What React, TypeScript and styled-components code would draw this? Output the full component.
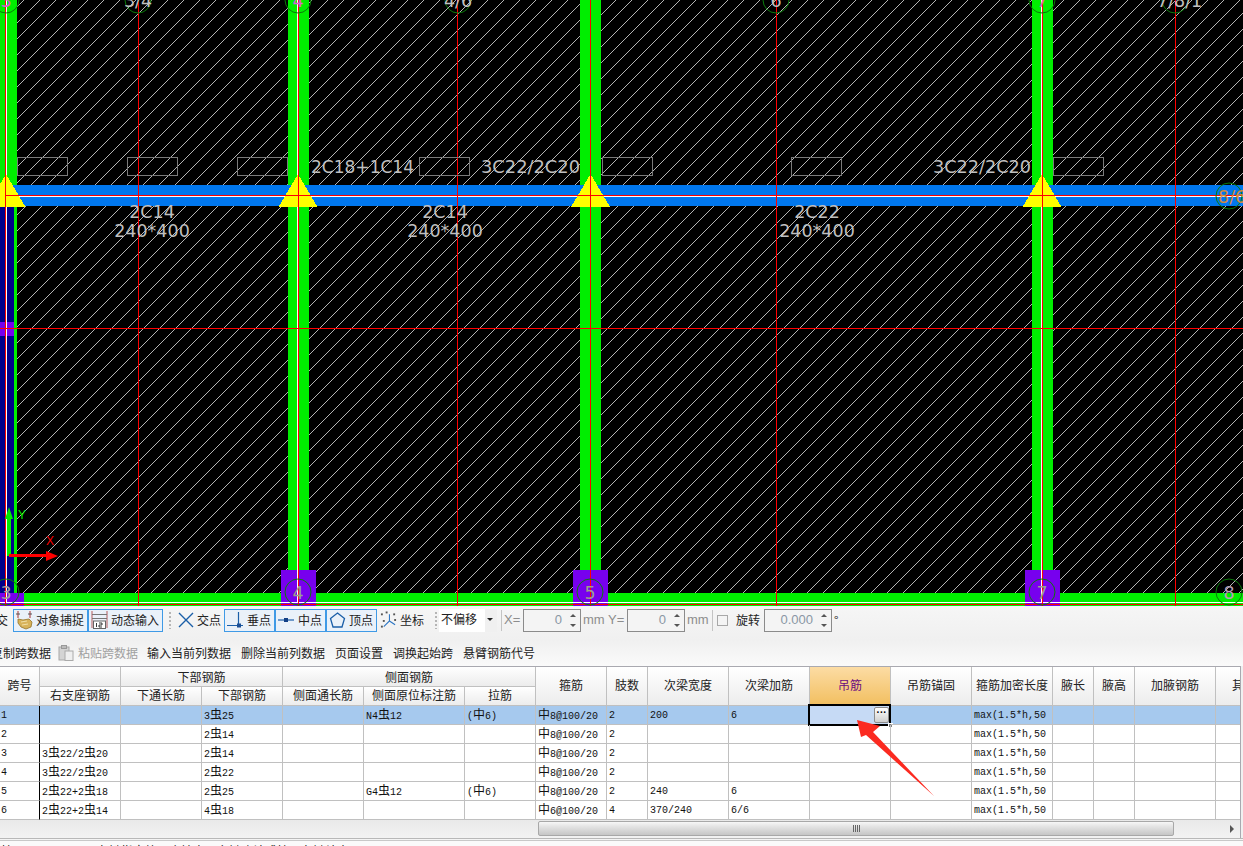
import React from "react";
import styled, { createGlobalStyle } from "styled-components";

const Global = createGlobalStyle`
  html, body { margin: 0; padding: 0; background: #f0f0f0; }
  body { font-family: "Noto Sans CJK SC", "Liberation Sans", sans-serif; font-size: 12px; color: #222; }
`;

const Page = styled.div`
  position: relative;
  width: 1243px;
  height: 846px;
  overflow: hidden;
  display: flex;
  flex-direction: column;
`;

/* ---------- CAD drawing ---------- */
const CadCanvas = styled.svg`
  display: block;
  width: 1243px;
  height: 606px;
  flex: none;
  background: #000;
`;

const crisp = { shapeRendering: "crispEdges" as const };
const GREEN = "#00ee00";
const BLUE = "#0077ee";
const PURPLE = "#7700ee";
const RED = "#ff0000";
const BEAM_COLS = [298, 590.5, 1042];

const Bubble = ({ x, y, label, color, tx }: { x: number; y: number; label: string; color: string; tx?: number }) => (
  <g>
    <circle cx={x} cy={y} r={13} fill="none" stroke="#0a7a0a" strokeWidth={1} />
    <text x={tx ?? x} y={y + 7} fill={color} fontFamily="DejaVu Sans" fontSize={17.5} textAnchor={tx ? "start" : "middle"}>
      {label}
    </text>
  </g>
);

const Drawing = () => (
  <CadCanvas viewBox="0 0 1243 606">
    <defs>
      <pattern id="hatch" width="16" height="16" patternUnits="userSpaceOnUse" patternTransform="translate(8 0)">
        <line x1="16" y1="0" x2="0" y2="16" stroke="#b4b4b4" strokeWidth="1" shapeRendering="crispEdges" />
      </pattern>
    </defs>
    <rect width="1243" height="606" fill="url(#hatch)" />

    {/* columns */}
    <rect x="0" y="0" width="17" height="600" fill={GREEN} {...crisp} />
    <rect x="0" y="207" width="14" height="386" fill="#00008b" {...crisp} />
    {[288, 580, 1032].map((x) => (
      <rect key={x} x={x} y="0" width="21" height="600" fill={GREEN} {...crisp} />
    ))}

    {/* bottom beam and main beam */}
    <rect x="0" y="593" width="1243" height="13" fill={GREEN} {...crisp} />
    <rect x="0" y="185" width="1243" height="21" fill={BLUE} {...crisp} />

    {/* purple supports */}
    <rect x="0" y="593" width="24" height="13" fill={PURPLE} {...crisp} />
    <rect x="0" y="322" width="14" height="14" fill={PURPLE} {...crisp} />
    <rect x="281" y="570" width="35" height="36" fill={PURPLE} {...crisp} />
    <rect x="573" y="570" width="35" height="36" fill={PURPLE} {...crisp} />
    <rect x="1025" y="570" width="35" height="36" fill={PURPLE} {...crisp} />

    {/* centre lines */}
    <rect x="6" y="196" width="1237" height="1" fill="#fff" {...crisp} />
    <rect x="0" y="602" width="1243" height="1" fill="#fff" {...crisp} />
    {[6, 297, 590, 1041].map((x) => (
      <rect key={x} x={x} y="0" width="1" height="603" fill="#fff" {...crisp} />
    ))}

    {/* triangles */}
    {[6, ...BEAM_COLS].map((x) => (
      <polygon key={x} points={`${x},174 ${x + 19.5},207 ${x - 19.5},207`} fill="#ffff00" {...crisp} />
    ))}

    {[5, 138, 298, 457, 590, 776, 1042, 1175].map((x) => (
      <rect key={x} x={x} y="0" width="1" height="606" fill={RED} {...crisp} />
    ))}
    <rect x="6" y="195" width="1237" height="1" fill={RED} {...crisp} />
    <rect x="0" y="328" width="1243" height="1" fill={RED} {...crisp} />
    <rect x="0" y="604" width="1243" height="1" fill={RED} {...crisp} />

    {/* original span boxes */}
    {[17, 127, 237, 419, 602, 791, 1053].map((x) => (
      <rect key={x} x={x + 0.5} y="157.5" width="50" height="18" fill="none" stroke="#7a7a7a" strokeWidth="1" {...crisp} />
    ))}

    {/* annotations */}
    <g fill="#bfbfbf" fontFamily="DejaVu Sans" fontSize="17.5">
      <text x="311" y="173" textLength={103} lengthAdjust="spacingAndGlyphs">2C18+1C14</text>
      <text x="481" y="173" textLength={99} lengthAdjust="spacingAndGlyphs">3C22/2C20</text>
      <text x="933" y="173" textLength={98} lengthAdjust="spacingAndGlyphs">3C22/2C20</text>
      <g textAnchor="middle">
        <text x="152" y="218">2C14</text>
        <text x="152" y="237">240*400</text>
        <text x="445" y="218">2C14</text>
        <text x="445" y="237">240*400</text>
        <text x="817" y="218">2C22</text>
        <text x="817" y="237">240*400</text>
      </g>
    </g>

    {/* axis bubbles */}
    <Bubble x={6} y={0} label="3" color="#d860d8" />
    <Bubble x={138} y={0} label="3/4" color="#c0c0c0" />
    <Bubble x={298} y={0} label="4" color="#d860d8" />
    <Bubble x={458} y={0} label="4/6" color="#c0c0c0" />
    <Bubble x={776} y={0} label="6" color="#c0c0c0" />
    <Bubble x={1042} y={0} label="7" color="#e060b0" />
    <Bubble x={1175} y={0} label="7/8/1" color="#c0c0c0" tx={1157} />
    <Bubble x={1229} y={196} label="8/6" color="#d08a3c" tx={1218} />
    <Bubble x={6} y={592} label="3" color="#a0a0a0" />
    <Bubble x={298} y={592} label="4" color="#9aa08a" />
    <Bubble x={590} y={592} label="5" color="#9aa08a" />
    <Bubble x={1042} y={592} label="7" color="#9aa08a" />
    <Bubble x={1229} y={592} label="8" color="#b8a0b8" />

    {/* UCS axes */}
    <rect x="7" y="519" width="4" height="37" fill={GREEN} {...crisp} />
    <polygon points="9,507 13,519 5,519" fill={GREEN} />
    <rect x="9" y="554" width="38" height="3" fill={RED} {...crisp} />
    <polygon points="58,556 46,551 46,561" fill={RED} />
    <text x="18" y="519" fill={GREEN} fontFamily="Liberation Sans" fontSize="12">Y</text>
    <text x="46" y="545" fill={RED} fontFamily="Liberation Sans" fontSize="12">X</text>
  </CadCanvas>
);

/* ---------- snap toolbar ---------- */
const SnapBar = styled.div`
  flex: none;
  height: 34px;
  box-sizing: border-box;
  padding-top: 3px;
  display: flex;
  align-items: flex-start;
  background: linear-gradient(#f6f6f6, #f0f0f0);
  white-space: nowrap;
`;

const CutLabel = styled.span`
  width: 13px;
  margin-left: -4px;
  margin-right: 4px;
  line-height: 21px;
  flex: none;
`;

const SnapButton = styled.div<{ $on?: boolean; $w: number }>`
  width: ${(p) => p.$w}px;
  height: 23px;
  flex: none;
  box-sizing: border-box;
  display: flex;
  align-items: center;
  gap: 3px;
  padding-left: 2px;
  padding-bottom: 1px;
  line-height: 20px;
  border: 1px solid ${(p) => (p.$on ? "#3f9ae6" : "transparent")};
  background: ${(p) => (p.$on ? "#eaf1f9" : "transparent")};
`;

const Grip = styled.div<{ $gapL: number; $gapR: number }>`
  width: 2px;
  height: 17px;
  margin: 3px ${(p) => p.$gapR}px 0 ${(p) => p.$gapL}px;
  flex: none;
  background: repeating-linear-gradient(#b5b5b5 0 2px, transparent 2px 4px);
`;

const Divider = styled.div<{ $gapL: number; $gapR: number }>`
  width: 1px;
  height: 21px;
  margin: 1px ${(p) => p.$gapR}px 0 ${(p) => p.$gapL}px;
  flex: none;
  background: #c4c4c4;
`;

const OffsetSelect = styled.div`
  width: 58px;
  height: 23px;
  flex: none;
  display: flex;
  background: #f0f0f0;
`;

const OffsetValue = styled.div`
  width: 46px;
  background: #fff;
  padding-left: 2px;
  box-sizing: border-box;
  line-height: 20px;
`;

const OffsetCaret = styled.div`
  width: 12px;
  position: relative;
  &::after {
    content: "";
    position: absolute;
    left: 2px;
    top: 9px;
    border-left: 3px solid transparent;
    border-right: 3px solid transparent;
    border-top: 3px solid #222;
  }
`;

const DimLabel = styled.span<{ $w: number; $dim?: boolean; $pad?: number }>`
  width: ${(p) => p.$w}px;
  flex: none;
  box-sizing: border-box;
  padding-left: ${(p) => p.$pad ?? 0}px;
  line-height: 22px;
  color: ${(p) => (p.$dim ? "#8d8d8d" : "#222")};
  font-family: ${(p) => (p.$dim ? '"Liberation Sans", sans-serif' : "inherit")};
  font-size: ${(p) => (p.$dim ? "13px" : "12px")};
`;

const Spin = styled.div<{ $w: number }>`
  position: relative;
  width: ${(p) => p.$w}px;
  height: 23px;
  flex: none;
  box-sizing: border-box;
  border: 1px solid #8b8b8b;
  background: #f4f4f4;
  padding-right: 18px;
  text-align: right;
  font-family: "Liberation Sans", sans-serif;
  font-size: 13px;
  line-height: 20px;
  color: #8a97a4;
`;

const SpinArrow = styled.span<{ $down?: boolean }>`
  position: absolute;
  right: 4px;
  ${(p) => (p.$down ? "bottom: 4px;" : "top: 4px;")}
  border-left: 3px solid transparent;
  border-right: 3px solid transparent;
  ${(p) => (p.$down ? "border-top: 3px solid #555;" : "border-bottom: 3px solid #555;")}
`;

const Check = styled.div`
  width: 11px;
  height: 11px;
  flex: none;
  box-sizing: border-box;
  margin: 6px 8px 0 0;
  border: 1px solid #a8a8a8;
  background: #f4f4f4;
`;

const IconMagnet = () => (
  <svg width="17" height="20" viewBox="0 0 17 20">
    <path d="M2 1v7M14 1v7" stroke="#a33" strokeWidth="1" />
    <path d="M0 4h4M12 4h4" stroke="#555" strokeWidth="1" />
    <path d="M2 9l5 1 6-1 3 3-1 5-5 2-5-2-3-4z" fill="#d8b35a" stroke="#94732a" strokeWidth="0.8" />
    <path d="M5 12l6-1M6 15l6-1" stroke="#f1e0a8" strokeWidth="1" />
  </svg>
);
const IconDyn = () => (
  <svg width="17" height="20" viewBox="0 0 17 20">
    <path d="M1 1v17M16 1v17" stroke="#b45a5a" strokeWidth="1" />
    <path d="M1 4.5h15M1 8.5h15" stroke="#777" strokeWidth="1" />
    <rect x="2.5" y="11" width="12" height="7.5" fill="#fff" stroke="#666" strokeWidth="1" />
    <path d="M5.5 13v4M8 13h3v2H8v2h3" stroke="#222" strokeWidth="0.9" fill="none" />
  </svg>
);
const IconCross = () => (
  <svg width="16" height="18" viewBox="0 0 16 18">
    <path d="M1 2l14 14M15 2L1 16" stroke="#1b5fa8" strokeWidth="1.4" />
  </svg>
);
const IconPerp = () => (
  <svg width="17" height="18" viewBox="0 0 17 18">
    <path d="M0 14.5h16M11.5 1v14" stroke="#1b5fa8" strokeWidth="1.2" />
    <rect x="10" y="12.5" width="4" height="4" fill="#1b4f96" />
  </svg>
);
const IconMid = () => (
  <svg width="17" height="18" viewBox="0 0 17 18">
    <path d="M0 9h16" stroke="#1b5fa8" strokeWidth="1.2" />
    <rect x="6" y="7" width="4" height="4" fill="#123f86" />
  </svg>
);
const IconApex = () => (
  <svg width="17" height="18" viewBox="0 0 17 18">
    <path d="M8.5 2l7 5.5L13 16H4L1.5 7.5z" fill="none" stroke="#1b5fa8" strokeWidth="1.3" />
  </svg>
);
const IconCoord = () => (
  <svg width="17" height="20" viewBox="0 0 18 20">
    <path d="M10 4v7l-6 6M10 11l6 4" stroke="#2a75c4" strokeWidth="1.1" fill="none" />
    <g fill="#555">
      <rect x="1" y="3" width="2" height="2" />
      <rect x="6" y="1" width="2" height="2" />
      <rect x="14" y="3" width="2" height="2" />
      <rect x="3" y="10" width="2" height="2" />
      <rect x="15" y="9" width="2" height="2" />
      <rect x="1" y="16" width="2" height="2" />
    </g>
  </svg>
);

const SnapToolbar = () => (
  <SnapBar>
    <CutLabel>交</CutLabel>
    <SnapButton $on $w={75}><IconMagnet />对象捕捉</SnapButton>
    <SnapButton $on $w={75}><IconDyn />动态输入</SnapButton>
    <Grip $gapL={6} $gapR={4} />
    <SnapButton $w={49}><IconCross />交点</SnapButton>
    <SnapButton $on $w={51}><IconPerp />垂点</SnapButton>
    <SnapButton $on $w={51}><IconMid />中点</SnapButton>
    <SnapButton $on $w={51}><IconApex />顶点</SnapButton>
    <SnapButton $w={58}><IconCoord />坐标</SnapButton>
    <Grip $gapL={0} $gapR={2} />
    <OffsetSelect>
      <OffsetValue>不偏移</OffsetValue>
      <OffsetCaret />
    </OffsetSelect>
    <Divider $gapL={4} $gapR={2} />
    <DimLabel $dim $w={19}>X=</DimLabel>
    <Spin $w={58}>0<SpinArrow /><SpinArrow $down /></Spin>
    <DimLabel $dim $w={27} $pad={2}>mm</DimLabel>
    <DimLabel $dim $w={19}>Y=</DimLabel>
    <Spin $w={58}>0<SpinArrow /><SpinArrow $down /></Spin>
    <DimLabel $dim $w={27} $pad={2}>mm</DimLabel>
    <Divider $gapL={0} $gapR={4} />
    <Check />
    <DimLabel $w={28}>旋转</DimLabel>
    <Spin $w={68}>0.000<SpinArrow /><SpinArrow $down /></Spin>
    <DimLabel $w={10} $pad={2}>°</DimLabel>
  </SnapBar>
);

/* ---------- action toolbar ---------- */
const ActionBar = styled.div`
  flex: none;
  height: 26px;
  box-sizing: border-box;
  padding-bottom: 1px;
  display: flex;
  align-items: center;
  gap: 10px;
  background: linear-gradient(#f0f0f0, #fafafa);
  white-space: nowrap;
`;

const ActionItem = styled.span<{ $off?: boolean; $shift?: number }>`
  display: inline-flex;
  align-items: center;
  gap: 4px;
  margin-left: ${(p) => p.$shift ?? 0}px;
  color: ${(p) => (p.$off ? "#a0a0a0" : "#222")};
`;

const IconPaste = () => (
  <svg width="16" height="16" viewBox="0 0 16 16">
    <rect x="1" y="2" width="10" height="13" fill="#d4d4d4" stroke="#a8a8a8" />
    <rect x="3.5" y="0.5" width="5" height="3" fill="#bcbcbc" stroke="#999" />
    <rect x="7" y="6" width="8" height="9.5" fill="#efefef" stroke="#aaa" />
  </svg>
);

const Actions = () => (
  <ActionBar>
    <ActionItem $shift={-9}>复制跨数据</ActionItem>
    <ActionItem $off $shift={-3}><IconPaste />粘贴跨数据</ActionItem>
    <ActionItem $shift={-1}>输入当前列数据</ActionItem>
    <ActionItem>删除当前列数据</ActionItem>
    <ActionItem>页面设置</ActionItem>
    <ActionItem>调换起始跨</ActionItem>
    <ActionItem>悬臂钢筋代号</ActionItem>
  </ActionBar>
);

/* ---------- grid ---------- */
const GridFrame = styled.div`
  flex: none;
  width: 1241px;
  height: 154px;
  box-sizing: border-box;
  border-top: 1px solid #a9a9b0;
  border-right: 1px solid #a9a9b0;
  overflow: hidden;
  background: #fff;
`;

const Grid = styled.table`
  table-layout: fixed;
  border-collapse: separate;
  border-spacing: 0;
  width: 1297px;
`;

const HeadCell = styled.th<{ $hot?: boolean; $group?: boolean }>`
  box-sizing: border-box;
  padding: 0 0 ${(p) => (p.$group ? 0 : 2)}px;
  height: ${(p) => (p.$group ? 20 : 19)}px;
  font-weight: 400;
  font-size: 12px;
  line-height: 16px;
  white-space: nowrap;
  overflow: hidden;
  color: ${(p) => (p.$hot ? "#6a0a80" : "#222")};
  background: ${(p) => (p.$hot ? "linear-gradient(#fcdca4, #f2bf60)" : "linear-gradient(#fff, #ececec)")};
  border-right: 1px solid #c0c0c0;
  border-bottom: 1px solid #c0c0c0;
`;

const DataRow = styled.tr<{ $sel?: boolean }>`
  background: ${(p) => (p.$sel ? "#a6c9ee" : "#fff")};
`;

const DataCell = styled.td<{ $frozen?: boolean }>`
  position: relative;
  box-sizing: border-box;
  height: 19px;
  padding: 0 0 0 ${(p) => (p.$frozen ? 1 : 2)}px;
  vertical-align: top;
  font-family: "Liberation Mono", monospace;
  font-size: 10px;
  color: #111;
  white-space: nowrap;
  overflow: visible;
  border-right: 1px solid ${(p) => (p.$frozen ? "#000" : "#c0c0c0")};
  border-bottom: 1px solid #c0c0c0;
`;

const CellText = styled.div`
  height: 16px;
  margin-top: 2px;
  line-height: 16px;
`;

const RebarMark = styled.span`
  font-family: "Noto Sans CJK SC", sans-serif;
  font-size: 12px;
  line-height: 1;
`;

const ActiveCell = styled.div`
  position: absolute;
  left: -2px;
  top: -2px;
  width: 83px;
  height: 22px;
  box-sizing: border-box;
  border: 2px solid #000;
  background: #c6daf5;
`;

const CellButton = styled.div`
  position: absolute;
  right: 0;
  top: 1px;
  width: 15px;
  height: 16px;
  box-sizing: border-box;
  border: 1px solid #8c8c8c;
  border-radius: 2px;
  background: linear-gradient(#fff, #cfcfcf);
  color: #000;
  font: 700 10px/9px "Liberation Sans", sans-serif;
  text-align: center;
`;

const FillHandle = styled.div`
  position: absolute;
  right: -4px;
  bottom: -4px;
  width: 3px;
  height: 3px;
  background: #808080;
  border: 1px solid #fff;
`;

const COLS = [40, 81, 81, 81, 81, 101, 71, 71, 41, 81, 81, 81, 81, 81, 41, 41, 81, 81];

const ROWS: string[][] = [
  ["1", "", "", "3虫25", "", "N4虫12", "(中6)", "中8@100/20", "2", "200", "6", "", "", "max(1.5*h,50", "", "", "", ""],
  ["2", "", "", "2虫14", "", "", "", "中8@100/20", "2", "", "", "", "", "max(1.5*h,50", "", "", "", ""],
  ["3", "3虫22/2虫20", "", "2虫14", "", "", "", "中8@100/20", "2", "", "", "", "", "max(1.5*h,50", "", "", "", ""],
  ["4", "3虫22/2虫20", "", "2虫22", "", "", "", "中8@100/20", "2", "", "", "", "", "max(1.5*h,50", "", "", "", ""],
  ["5", "2虫22+2虫18", "", "2虫25", "", "G4虫12", "(中6)", "中8@100/20", "2", "240", "6", "", "", "max(1.5*h,50", "", "", "", ""],
  ["6", "2虫22+2虫14", "", "4虫18", "", "", "", "中6@100/20", "4", "370/240", "6/6", "", "", "max(1.5*h,50", "", "", "", ""],
];

const Rebar = ({ text }: { text: string }) => (
  <CellText>
    {text.split(/([中虫])/).map((part, i) =>
      part === "中" || part === "虫" ? <RebarMark key={i}>{part}</RebarMark> : part
    )}
  </CellText>
);

const SteelGrid = () => (
  <GridFrame>
    <Grid>
      <colgroup>
        {COLS.map((w, i) => (
          <col key={i} style={{ width: w }} />
        ))}
      </colgroup>
      <thead>
        <tr>
          <HeadCell rowSpan={2}>跨号</HeadCell>
          <HeadCell $group />
          <HeadCell $group colSpan={2}>下部钢筋</HeadCell>
          <HeadCell $group colSpan={3}>侧面钢筋</HeadCell>
          <HeadCell rowSpan={2}>箍筋</HeadCell>
          <HeadCell rowSpan={2}>肢数</HeadCell>
          <HeadCell rowSpan={2}>次梁宽度</HeadCell>
          <HeadCell rowSpan={2}>次梁加筋</HeadCell>
          <HeadCell rowSpan={2} $hot>吊筋</HeadCell>
          <HeadCell rowSpan={2}>吊筋锚固</HeadCell>
          <HeadCell rowSpan={2}>箍筋加密长度</HeadCell>
          <HeadCell rowSpan={2}>腋长</HeadCell>
          <HeadCell rowSpan={2}>腋高</HeadCell>
          <HeadCell rowSpan={2}>加腋钢筋</HeadCell>
          <HeadCell rowSpan={2}>其他箍筋</HeadCell>
        </tr>
        <tr>
          <HeadCell>右支座钢筋</HeadCell>
          <HeadCell>下通长筋</HeadCell>
          <HeadCell>下部钢筋</HeadCell>
          <HeadCell>侧面通长筋</HeadCell>
          <HeadCell>侧面原位标注筋</HeadCell>
          <HeadCell>拉筋</HeadCell>
        </tr>
      </thead>
      <tbody>
        {ROWS.map((row, r) => (
          <DataRow key={r} $sel={r === 0}>
            {row.map((cell, c) => (
              <DataCell key={c} $frozen={c === 0}>
                <Rebar text={cell} />
                {r === 0 && c === 11 && (
                  <ActiveCell>
                    <CellButton>···</CellButton>
                    <FillHandle />
                  </ActiveCell>
                )}
              </DataCell>
            ))}
          </DataRow>
        ))}
      </tbody>
    </Grid>
  </GridFrame>
);

/* ---------- scrollbar / status ---------- */
const ScrollTrack = styled.div`
  flex: none;
  position: relative;
  width: 1241px;
  height: 18px;
  box-sizing: border-box;
  padding: 1px 0 0 538px;
  background: linear-gradient(#e9e9e9, #f2f2f2);
  border-right: 1px solid #a9a9b0;
`;

const ScrollThumb = styled.div`
  width: 636px;
  height: 15px;
  box-sizing: border-box;
  display: flex;
  align-items: center;
  justify-content: center;
  gap: 1px;
  border: 1px solid #a8a8a8;
  border-radius: 2px;
  background: linear-gradient(#f7f7f7, #e6e6e6 30%, #c6c6c6);
`;

const ThumbGrip = styled.i`
  width: 1px;
  height: 7px;
  background: #666;
`;

const ScrollArrow = styled.span`
  position: absolute;
  right: 6px;
  top: 5px;
  border-top: 4px solid transparent;
  border-bottom: 4px solid transparent;
  border-left: 4px solid #555;
`;

const StatusBar = styled.div`
  flex: none;
  height: 8px;
  box-sizing: border-box;
  border-top: 1px solid #b8b8b8;
  box-shadow: inset 0 1px 0 #f4f4f4, inset 0 2px 0 #c8c8c8;
  padding: 5px 0 0 1px;
  overflow: hidden;
  background: #fafafa;
  white-space: nowrap;
  line-height: 14px;
  color: #111;
`;

const StatusGap = styled.span`
  display: inline-block;
  width: 84px;
`;

const Arrow = styled.svg`
  position: absolute;
  left: 850px;
  top: 715px;
  width: 90px;
  height: 85px;
  pointer-events: none;
`;

export default function App() {
  return (
    <Page>
      <Global />
      <Drawing />
      <SnapToolbar />
      <Actions />
      <SteelGrid />
      <ScrollTrack>
        <ScrollThumb>
          <ThumbGrip /><ThumbGrip /><ThumbGrip /><ThumbGrip />
        </ScrollThumb>
        <ScrollArrow />
      </ScrollTrack>
      <StatusBar>按<StatusGap />左键指定第一个端点，右键确认或按回车键结束</StatusBar>
      <Arrow viewBox="850 715 90 85">
        <polygon points="857,720 880,726 873,732 934,796 866,735 861,737" fill="#fb2a20" />
      </Arrow>
    </Page>
  );
}
